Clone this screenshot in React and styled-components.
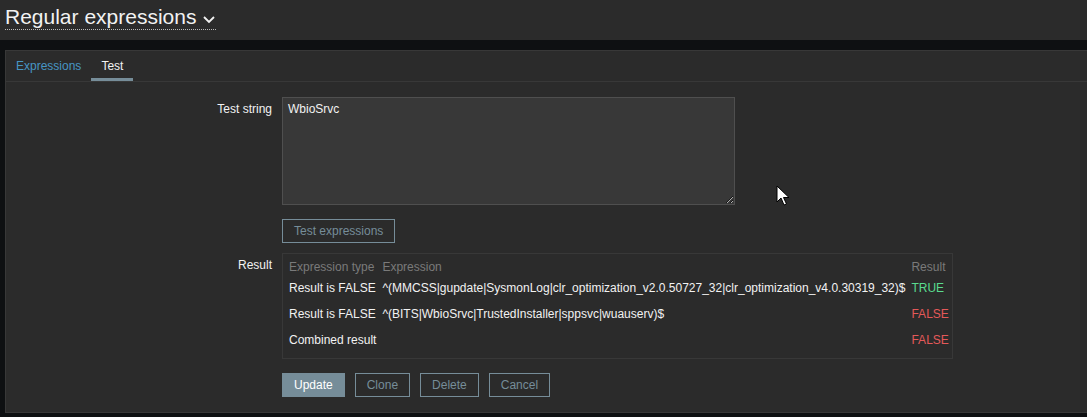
import React from "react";
import styled, { createGlobalStyle } from "styled-components";

const GlobalStyle = createGlobalStyle`
  html, body {
    margin: 0;
    padding: 0;
    background: #0e1012;
    font-family: Arial, "Liberation Sans", sans-serif;
    font-size: 12px;
    color: #f2f2f2;
  }
`;

const expressions = [
  {
    type: "Result is FALSE",
    expression:
      "^(MMCSS|gupdate|SysmonLog|clr_optimization_v2.0.50727_32|clr_optimization_v4.0.30319_32)$",
    result: true,
  },
  {
    type: "Result is FALSE",
    expression: "^(BITS|WbioSrvc|TrustedInstaller|sppsvc|wuauserv)$",
    result: false,
  },
];

export default function App() {
  return (
    <Page>
      <GlobalStyle />
      <Header>
        <Title>
          Regular expressions
          <svg width="14" height="10" viewBox="0 0 14 10">
            <path d="M2 3 L7 8 L12 3" fill="none" stroke="#f2f2f2" strokeWidth="1.8" />
          </svg>
        </Title>
      </Header>

      <Panel>
        <Tabs>
          <Tab>Expressions</Tab>
          <Tab active>Test</Tab>
        </Tabs>

        <Form>
          <Label>Test string</Label>
          <Field>
            <TextArea defaultValue="WbioSrvc" spellCheck={false} />
          </Field>

          <span />
          <Field>
            <Button>Test expressions</Button>
          </Field>

          <Label>Result</Label>
          <Field>
            <ResultBox>
              <ResultTable>
                <thead>
                  <tr>
                    <Th>Expression type</Th>
                    <Th>Expression</Th>
                    <Th>Result</Th>
                  </tr>
                </thead>
                <tbody>
                  {expressions.map((row, i) => (
                    <tr key={i}>
                      <Td>{row.type}</Td>
                      <Td>{row.expression}</Td>
                      <Td status={row.result ? "ok" : "bad"}>
                        {row.result ? "TRUE" : "FALSE"}
                      </Td>
                    </tr>
                  ))}
                  <tr>
                    <Td>Combined result</Td>
                    <Td />
                    <Td status="bad">FALSE</Td>
                  </tr>
                </tbody>
              </ResultTable>
            </ResultBox>
          </Field>

          <span />
          <Actions>
            <Button primary>Update</Button>
            <Button>Clone</Button>
            <Button>Delete</Button>
            <Button>Cancel</Button>
          </Actions>
        </Form>
      </Panel>

      <Cursor width="14" height="22" viewBox="0 0 14 22">
        <path
          d="M1 1 L1 17 L5 13 L8 20 L10.5 19 L7.5 12.5 L13 12.5 Z"
          fill="#fff"
          stroke="#000"
          strokeWidth="1"
        />
      </Cursor>
    </Page>
  );
}

const Page = styled.div`
  position: relative;
  width: 1087px;
  height: 417px;
  overflow: hidden;
`;

const Header = styled.div`
  height: 40px;
  background: #2b2b2b;
  padding: 5px 0 0 5px;
  box-sizing: border-box;
`;

const Title = styled.h1`
  display: inline-flex;
  align-items: center;
  gap: 6px;
  margin: 0;
  font-size: 21px;
  font-weight: normal;
  line-height: 24px;
  color: #f2f2f2;
  border-bottom: 1px dotted #b8b8b8;

  svg {
    margin-top: 3px;
  }
`;

const Panel = styled.div`
  margin: 10px 0 0 5px;
  height: 363px;
  box-sizing: border-box;
  background: #2b2b2b;
  border: 1px solid #383838;
  border-right: none;
`;

const Tabs = styled.div`
  display: flex;
  border-bottom: 1px solid #383838;
  height: 30px;
  box-sizing: content-box;
`;

const Tab = styled.div`
  padding: 8px 10px 0;
  line-height: 14px;
  box-sizing: border-box;
  height: 30px;
  color: ${(p) => (p.active ? "#f2f2f2" : "#4796c4")};
  border-bottom: 3px solid ${(p) => (p.active ? "#768d99" : "transparent")};
`;

const Form = styled.div`
  display: grid;
  grid-template-columns: 266px 1fr;
  column-gap: 10px;
  padding-top: 15px;
`;

const Label = styled.div`
  text-align: right;
  line-height: 14px;
  padding-top: ${(p) => p.pad ?? 5}px;
`;

const Field = styled.div`
  display: flex;
`;

const TextArea = styled.textarea`
  width: 453px;
  height: 108px;
  box-sizing: border-box;
  margin: 0 0 14px;
  padding: 4px 5px;
  background: #383838;
  border: 1px solid #4f4f4f;
  color: #f2f2f2;
  font-family: Arial, "Liberation Sans", sans-serif;
  font-size: 12px;
  line-height: 14px;
  outline: none;
`;

const Button = styled.button`
  height: 24px;
  padding: 0 11px;
  margin-bottom: 10px;
  font-family: Arial, "Liberation Sans", sans-serif;
  font-size: 12px;
  border: 1px solid #768d99;
  background: ${(p) => (p.primary ? "#768d99" : "transparent")};
  color: ${(p) => (p.primary ? "#ffffff" : "#768d99")};
  cursor: pointer;
`;

const ResultBox = styled.div`
  width: 671px;
  box-sizing: border-box;
  border: 1px solid #383838;
  padding: 1px 3px 5px;
  margin-bottom: 14px;
`;

const ResultTable = styled.table`
  border-collapse: collapse;
`;

const Th = styled.th`
  text-align: left;
  font-weight: normal;
  color: #7a7a7a;
  line-height: 14px;
  padding: 5px 3px 1px;
  white-space: nowrap;
`;

const Td = styled.td`
  line-height: 14px;
  padding: 6px 3px;
  white-space: nowrap;
  color: ${(p) =>
    p.status === "ok" ? "#59db8f" : p.status === "bad" ? "#e45959" : "#f2f2f2"};
`;

const Actions = styled.div`
  display: flex;
  gap: 10px;
`;

const Cursor = styled.svg`
  position: absolute;
  left: 776px;
  top: 185px;
`;
